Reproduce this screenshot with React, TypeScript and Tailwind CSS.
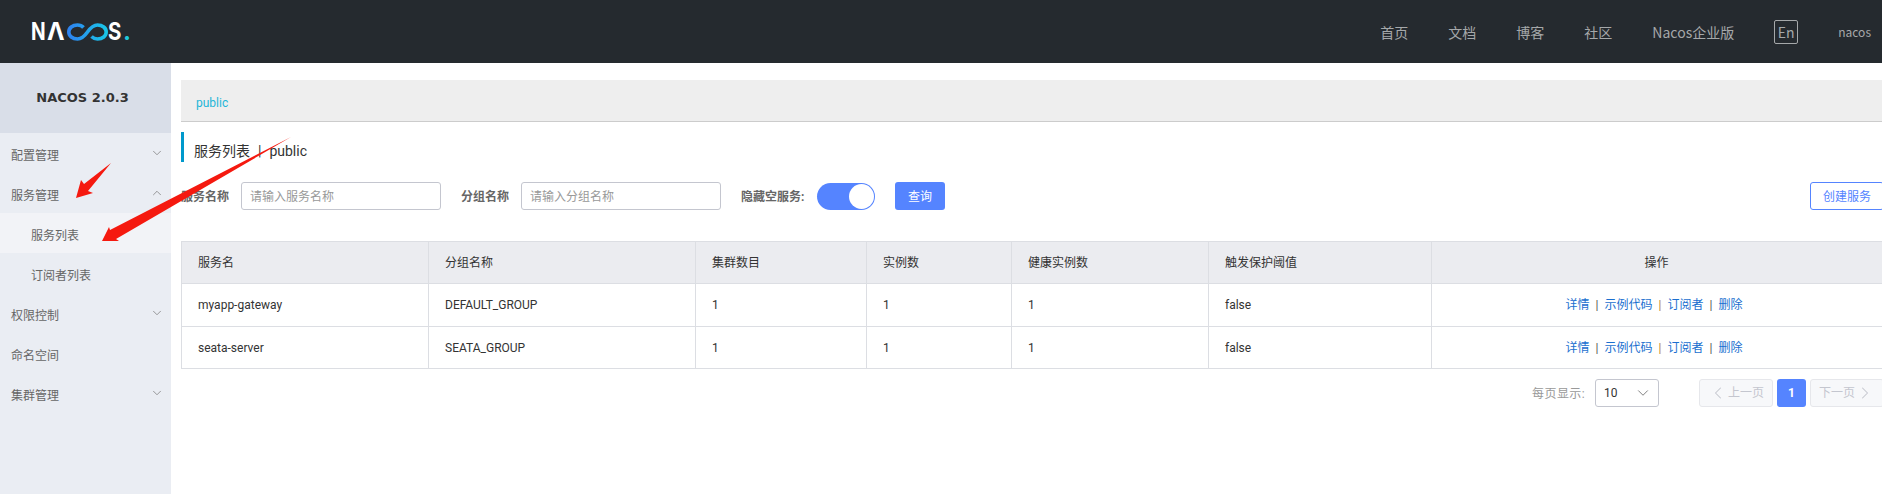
import React from "react";
import { ChevronDown, ChevronLeft, ChevronRight, ChevronUp } from "lucide-react";

const navLinks = ["首页", "文档", "博客", "社区", "Nacos企业版"];

const rows = [
  { name: "myapp-gateway", group: "DEFAULT_GROUP", rowClass: "h-[43px]" },
  { name: "seata-server", group: "SEATA_GROUP", rowClass: "h-[42px]" },
];

const headers = ["服务名", "分组名称", "集群数目", "实例数", "健康实例数", "触发保护阈值"];

const cellClass = "border border-[#dcdee3] px-4 font-normal";

const Logo = () => (
  <div className="flex items-center font-['Inter',sans-serif] text-[24px] font-bold leading-none text-white">
    <span className="inline-block w-4 origin-left scale-x-[0.8]">N</span>
    <span className="inline-block w-[20px] origin-left scale-x-[0.98]">Λ</span>
    <svg width="41" height="18" viewBox="0 0 41 18" fill="none">
      <defs>
        <linearGradient id="nacos-loop" x1="0" y1="0" x2="41" y2="0" gradientUnits="userSpaceOnUse">
          <stop offset="0" stopColor="#2f80f0" />
          <stop offset="1" stopColor="#18c8e8" />
        </linearGradient>
      </defs>
      <path
        d="M16.500 4.500C15 2.800 13 2 10.500 2C5.500 2 1.800 5 1.800 9C1.800 13 5.500 16 10.500 16C15.500 16 20.500 9 20.500 9C20.500 9 25.500 2 30.500 2C35.500 2 39.200 5 39.200 9C39.200 13 35.500 16 30.500 16C28 16 26 15 24.500 13.500"
        stroke="url(#nacos-loop)"
        strokeWidth="3.600"
      />
    </svg>
    <span className="inline-block w-[15px] origin-left scale-x-[0.85]">S</span>
    <span className="text-[#1fc8dc]">.</span>
  </div>
);

const Header = () => (
  <header className="flex h-[63px] items-center bg-[#252a2f] pl-[31px] pr-[11px]">
    <Logo />
    <nav className="ml-auto flex items-center gap-10 font-['Noto_Sans_CJK_SC',sans-serif] text-sm text-[#a5a8aa]">
      {navLinks.map((link) => (
        <span key={link}>{link}</span>
      ))}
      <span className="flex h-6 w-6 items-center justify-center rounded-[2px] border border-[#a5a8aa]">En</span>
      <span className="text-xs">nacos</span>
    </nav>
  </header>
);

const MenuItem = ({ label, icon, sub, active }: { label: string; icon?: "up" | "down"; sub?: boolean; active?: boolean }) => (
  <div
    className={`flex h-10 items-center justify-between pr-[7px] text-xs text-[#666] ${sub ? "pl-[31px]" : "pl-[11px]"} ${active ? "bg-[#f2f3f7]" : ""}`}
  >
    <span className="mt-[6px]">{label}</span>
    {icon === "down" && <ChevronDown size={14} strokeWidth={1.25} className="text-[#777]" />}
    {icon === "up" && <ChevronUp size={14} strokeWidth={1.25} className="text-[#777]" />}
  </div>
);

const Sidebar = () => (
  <aside className="w-[171px] shrink-0 bg-[#eaedf3]">
    <div className="flex h-[70px] items-center justify-center bg-[#d9dee8] pr-[6px] font-['DejaVu_Sans',sans-serif] text-[13px] font-bold text-[#333]">
      NACOS 2.0.3
    </div>
    <MenuItem label="配置管理" icon="down" />
    <MenuItem label="服务管理" icon="up" />
    <MenuItem label="服务列表" sub active />
    <MenuItem label="订阅者列表" sub />
    <MenuItem label="权限控制" icon="down" />
    <MenuItem label="命名空间" />
    <MenuItem label="集群管理" icon="down" />
  </aside>
);

const TextField = ({ placeholder }: { placeholder: string }) => (
  <input
    readOnly
    placeholder={placeholder}
    className="h-7 w-[200px] rounded-[3px] border border-[#c4c6cf] px-2 pt-[2px] text-xs outline-none placeholder:text-[#999]"
  />
);

const FilterBar = () => (
  <div className="mt-5 flex h-7 items-center text-xs">
    <span className="w-[60px] pt-[2px] font-bold text-[#666]">服务名称</span>
    <TextField placeholder="请输入服务名称" />
    <span className="ml-5 w-[60px] pt-[2px] font-bold text-[#666]">分组名称</span>
    <TextField placeholder="请输入分组名称" />
    <span className="ml-5 w-[76px] pt-[2px] font-bold text-[#666]">隐藏空服务:</span>
    <div className="flex h-[27px] w-[58px] items-center justify-end rounded-full bg-[#5584ff] p-[1px]">
      <span className="h-[25px] w-[25px] rounded-full bg-white" />
    </div>
    <button className="ml-5 h-7 w-[50px] rounded-[3px] bg-[#5584ff] pt-[2px] text-white">查询</button>
    <button className="ml-auto h-7 w-[74px] rounded-[3px] border border-[#5584ff] pt-[2px] text-[#5584ff]">创建服务</button>
  </div>
);

const Actions = () => (
  <span className="text-[#1a6fcf]">
    详情<span className="mx-[6px] text-[#555]">|</span>示例代码<span className="mx-[6px] text-[#b8862f]">|</span>订阅者
    <span className="mx-[6px] text-[#555]">|</span>删除
  </span>
);

const ServiceTable = () => (
  <table className="mt-[31px] w-full table-fixed border-collapse text-xs text-[#333]">
    <colgroup>
      <col className="w-[247px]" />
      <col className="w-[267px]" />
      <col className="w-[171px]" />
      <col className="w-[145px]" />
      <col className="w-[197px]" />
      <col className="w-[223px]" />
      <col />
    </colgroup>
    <thead>
      <tr className="h-[42px] bg-[#ebecf0]">
        {headers.map((h) => (
          <th key={h} className={`${cellClass} text-left`}>
            {h}
          </th>
        ))}
        <th className={`${cellClass} pr-[18px] text-center`}>操作</th>
      </tr>
    </thead>
    <tbody>
      {rows.map((row) => (
        <tr key={row.name} className={row.rowClass}>
          <td className={cellClass}>{row.name}</td>
          <td className={cellClass}>{row.group}</td>
          <td className={cellClass}>1</td>
          <td className={cellClass}>1</td>
          <td className={cellClass}>1</td>
          <td className={cellClass}>false</td>
          <td className={`${cellClass} pr-[23px] text-center`}>
            <Actions />
          </td>
        </tr>
      ))}
    </tbody>
  </table>
);

const Pagination = () => (
  <div className="mt-[10px] flex h-7 items-center justify-end text-xs">
    <span className="pt-[2px] tracking-[0.4px] text-[#999]">每页显示:</span>
    <div className="ml-[10px] flex h-7 w-16 items-center justify-between rounded-[3px] border border-[#c4c6cf] pl-2 pr-[6px] text-[#333]">
      <span>10</span>
      <ChevronDown size={18} strokeWidth={1.25} className="text-[#777]" />
    </div>
    <button className="ml-10 flex h-7 w-[74px] items-center justify-center rounded-[3px] border border-[#e6e7eb] bg-[#f7f8fa] text-[#c4c6cf]">
      <ChevronLeft size={20} strokeWidth={1.25} />
      上一页
    </button>
    <button className="ml-1 h-7 w-[29px] rounded-[3px] bg-[#5584ff] font-bold text-white">1</button>
    <button className="ml-1 flex h-7 w-[74px] items-center justify-center rounded-[3px] border border-[#e6e7eb] bg-[#f7f8fa] text-[#c4c6cf]">
      下一页
      <ChevronRight size={20} strokeWidth={1.25} />
    </button>
  </div>
);

// the two red annotation arrows drawn over the screenshot
const Arrows = () => (
  <svg width="300" height="120" viewBox="60 130 300 120" className="pointer-events-none absolute left-[60px] top-[130px]">
    <polygon points="111,163 88,191 93,193 76,198 81,180 84,184" fill="#f5190f" />
    <polygon points="291,137 116,239 119,241 102,241 109,227 110,230" fill="#f5190f" />
  </svg>
);

export default function App() {
  return (
    <div className="relative h-[494px] w-[1882px] overflow-hidden bg-white font-['Roboto','Noto_Sans_CJK_SC',sans-serif]">
      <Header />
      <div className="flex h-[431px]">
        <Sidebar />
        <main className="w-[1713px] shrink-0 pl-[10px] pt-[17px]">
          <div className="flex h-[42px] items-center border-b border-[#ccc] bg-[#eee] pl-[15px] pt-[4px] text-xs text-[#1fb6d8]">
            public
          </div>
          <div className="mt-[10px] flex h-[30px] items-center border-l-[3px] border-[#09c] pl-[10px] pt-[8px] text-sm text-[#333]">
            服务列表<span className="mx-2">|</span>public
          </div>
          <FilterBar />
          <ServiceTable />
          <Pagination />
        </main>
      </div>
      <Arrows />
    </div>
  );
}
